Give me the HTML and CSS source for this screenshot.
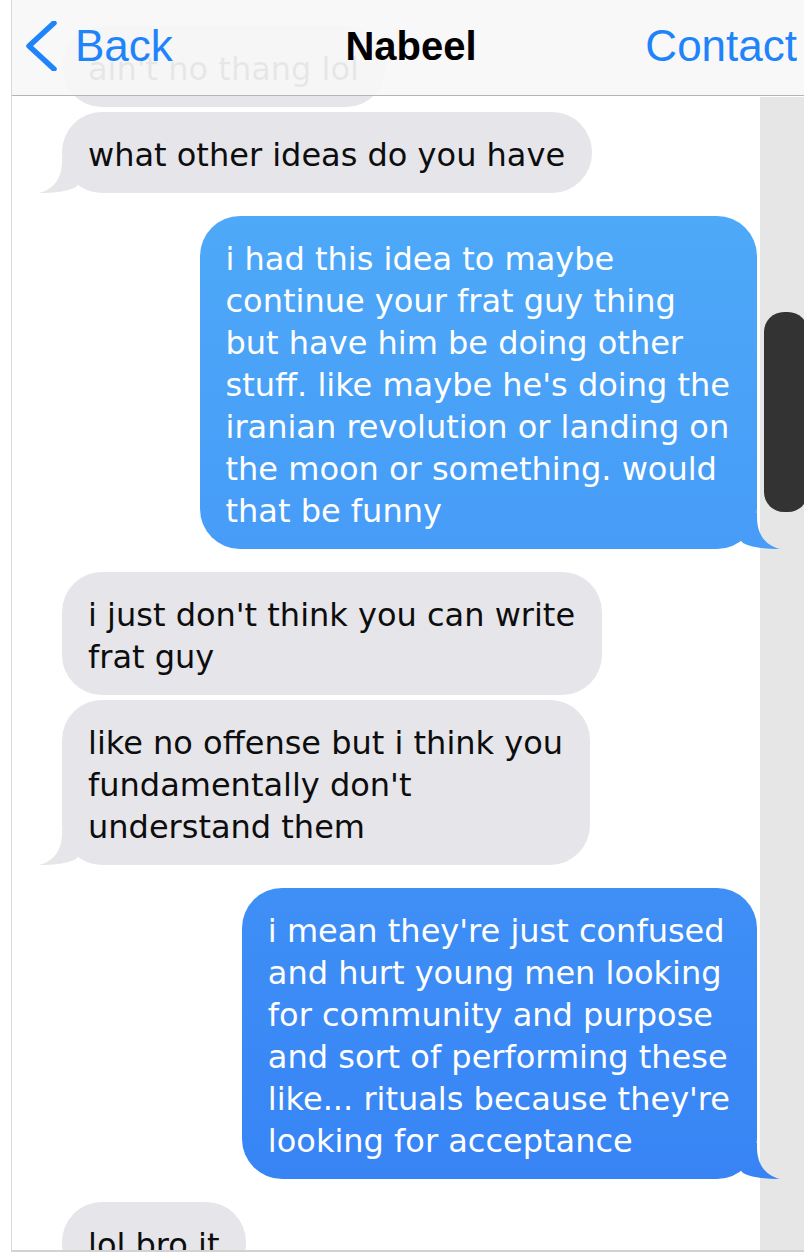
FILE: index.html
```html
<!DOCTYPE html>
<html>
<head>
<meta charset="utf-8">
<link rel="stylesheet" href="styles.css">
</head>
<body>
<div class="screen">
  <header class="navbar">
    <div class="nav-back">
      <svg class="chev" width="32" height="50" viewBox="0 0 32 50"><polyline points="29,2 4,25 29,48" fill="none" stroke="#1f84fa" stroke-width="5.5" stroke-linecap="round" stroke-linejoin="round"/></svg>
      <span>Back</span>
    </div>
    <h1 class="nav-title">Nabeel</h1>
    <div class="nav-contact">Contact</div>
  </header>
  <main class="thread">
    <div class="msg them">ain't no thang lol</div>
    <div class="msg them has-tail">what other ideas do you have<span class="tail"></span></div>
    <div class="msg me has-tail">i had this idea to maybe<br>continue your frat guy thing<br>but have him be doing other<br>stuff. like maybe he's doing the<br>iranian revolution or landing on<br>the moon or something. would<br>that be funny<span class="tail"></span></div>
    <div class="msg them">i just don't think you can write<br>frat guy</div>
    <div class="msg them has-tail">like no offense but i think you<br>fundamentally don't<br>understand them<span class="tail"></span></div>
    <div class="msg me has-tail">i mean they're just confused<br>and hurt young men looking<br>for community and purpose<br>and sort of performing these<br>like... rituals because they're<br>looking for acceptance<span class="tail"></span></div>
    <div class="msg them">lol bro it</div>
  </main>
  <aside class="track"><div class="thumb"></div></aside>
</div>
</body>
</html>
```

FILE: styles.css
```css
html, body {
  margin: 0;
  padding: 0;
  background: #ffffff;
}

.screen {
  position: relative;
  display: flex;
  margin-left: 11px;
  height: 1250px;
  border-left: 1px solid #d9d9d9;
  border-bottom: 2px solid #d2d2d2;
  overflow: hidden;
  background: #ffffff;
}

.navbar {
  position: absolute;
  top: 0;
  left: 0;
  right: 0;
  z-index: 10;
  height: 96px;
  box-sizing: border-box;
  padding: 0 7px 4px 13px;
  display: grid;
  grid-template-columns: 1fr auto 1fr;
  align-items: center;
  background: rgba(248, 248, 248, 0.93);
  border-bottom: 1px solid #b4b4b4;
  font-family: "Liberation Sans", Arial, sans-serif;
}

.nav-back {
  display: flex;
  align-items: center;
  gap: 18px;
  color: #1f84fa;
  font-size: 44px;
  line-height: 1;
}

.chev {
  display: block;
}

.nav-title {
  margin: 0;
  font-size: 40px;
  font-weight: bold;
  color: #000;
  line-height: 1;
}

.nav-contact {
  justify-self: end;
  color: #1f84fa;
  font-size: 44px;
  line-height: 1;
}

.thread {
  flex: 1;
  display: flex;
  flex-direction: column;
  padding: 26px 3px 0 50px;
  font-family: "DejaVu Sans", Verdana, sans-serif;
  font-size: 32px;
  line-height: 42px;
}

.msg {
  position: relative;
  width: fit-content;
  white-space: nowrap;
  padding: 22px 27px 17px 26px;
  border-radius: 40px;
}

.msg + .msg {
  margin-top: 5px;
}

.them + .me,
.me + .them {
  margin-top: 23px;
}

.them {
  align-self: flex-start;
  background: #e5e5ea;
  color: #0d0d0d;
}

.me {
  align-self: flex-end;
  color: #ffffff;
  background: linear-gradient(to bottom, #53b1f9 0%, #3681f5 100%) fixed;
}

.tail {
  position: absolute;
  bottom: 0;
  width: 44px;
  height: 36px;
  z-index: 2;
}

.them .tail {
  left: -23px;
  background: #e5e5ea;
  clip-path: path('M23 0 L23 4 C23 20 16 32 0 36 C12 36 28 35 37 30 L44 22 L44 0 Z');
}

.me .tail {
  right: -23px;
  background: linear-gradient(to bottom, #53b1f9 0%, #3681f5 100%) fixed;
  clip-path: path('M21 0 L21 4 C21 20 28 32 44 36 C32 36 16 35 7 30 L0 22 L0 0 Z');
}

.track {
  width: 44px;
  flex: none;
  margin-top: 97px;
  background: #e6e6e6;
}

.thumb {
  margin: 215px 0 0 4px;
  width: 44px;
  height: 200px;
  border-radius: 20px;
  background: #333333;
}
```
